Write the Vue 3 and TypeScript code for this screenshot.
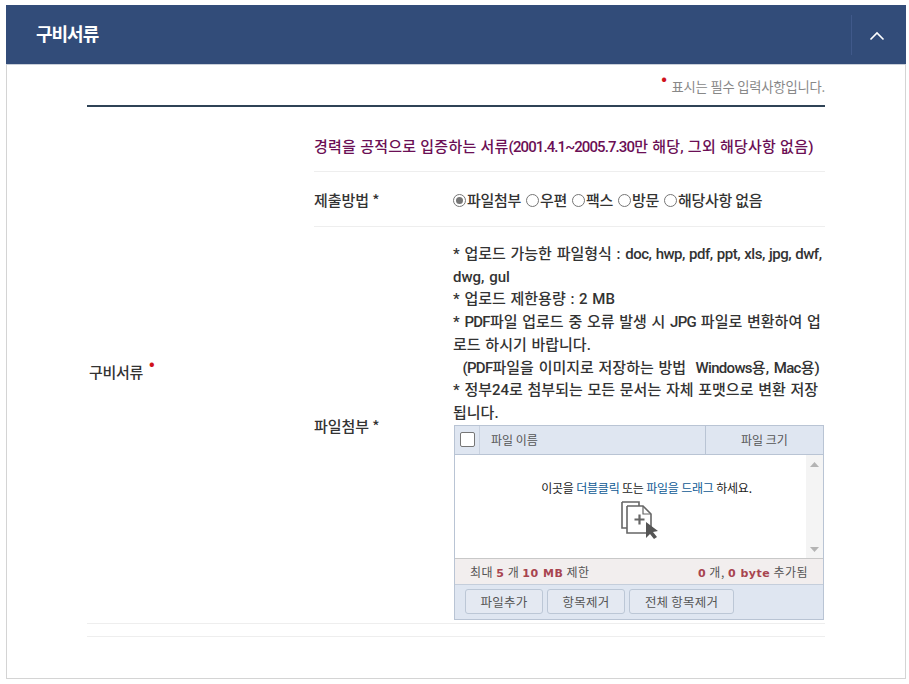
<script setup lang="ts">
const methods = ['파일첨부', '우편', '팩스', '방문', '해당사항 없음']
</script>

<template>
  <div class="page">
    <section class="card">
      <header class="head">
        <h2>구비서류</h2>
        <div class="toggle">
          <svg width="16" height="10" viewBox="0 0 16 10"><path d="M1.5 8.5 8 2l6.5 6.5" fill="none" stroke="#fff" stroke-width="1.6" /></svg>
        </div>
      </header>
      <div class="body">
        <p class="note"><i class="dot">•</i> 표시는 필수 입력사항입니다.</p>
        <div class="form">
          <div class="label"><span>구비서류</span><i class="dot big">•</i></div>
          <div class="rows">
            <div class="row title"><span>경력을 공적으로 입증하는 서류<span class="tight-date">(2001.4.1~2005.7.30</span>만 해당, 그외 해당사항 없음)</span></div>
            <div class="row method">
              <div class="key">제출방법 *</div>
              <div class="val radios">
                <label v-for="(m, i) in methods" :key="m" class="radio">
                  <span class="circle" :class="{ on: i === 0 }"></span>{{ m }}
                </label>
              </div>
            </div>
            <div class="row files">
              <div class="key">파일첨부 *</div>
              <div class="val">
                <div class="info">
                  * 업로드 가능한 파일형식 : <span class="tight">doc, hwp, pdf, ppt, xls, jpg, dwf,</span><br />
                  dwg, gul<br />
                  * 업로드 제한용량 : 2 MB<br />
                  * <span class="tighter">PDF</span>파일 업로드 중 오류 발생 시 <span class="tighter">JPG</span> 파일로 변환하여 업<br />
                  로드 하시기 바랍니다.<br />
                  &nbsp;&nbsp;<span class="tighter">(PDF</span>파일을 이미지로 저장하는 방법&nbsp; <span class="tighter">Windows</span>용, <span class="tighter">Mac</span>용)<br />
                  * 정부24로 첨부되는 모든 문서는 자체 포맷으로 변환 저장<br />
                  됩니다.
                </div>
                <div class="uploader">
                  <div class="u-head">
                    <div class="u-check"><span class="box"></span></div>
                    <div class="u-name">파일 이름</div>
                    <div class="u-size">파일 크기</div>
                  </div>
                  <div class="u-drop">
                    <div class="u-msg">
                      <p>이곳을 <b>더블클릭</b> 또는 <b>파일을 드래그</b> 하세요.</p>
                      <svg width="38" height="40" viewBox="0 0 38 40" class="u-icon">
                        <g fill="none" stroke="#666" stroke-width="1.6">
                          <path d="M1 3h17v4" />
                          <path d="M1 3v26h5" />
                          <path d="M6 7h16l8 8v15" fill="#fff" />
                          <path d="M6 7v27h19" />
                          <path d="M22 7v8h8" stroke-width="1.2" />
                        </g>
                        <path d="M13.5 20.5h10M18.5 15.5v10" stroke="#666" stroke-width="2.2" />
                        <path d="M25 23v16l4-4 4 5 3-2-4-5 5-1z" fill="#555" />
                      </svg>
                    </div>
                    <div class="u-scroll">
                      <svg width="9" height="5" viewBox="0 0 9 5"><path d="M4.5 0 9 5H0z" fill="#b4b4b4" /></svg>
                      <svg width="9" height="5" viewBox="0 0 9 5"><path d="M4.5 5 9 0H0z" fill="#b4b4b4" /></svg>
                    </div>
                  </div>
                  <div class="u-stat">
                    <span>최대 <b>5</b> 개 <b>10 MB</b> 제한</span>
                    <span><b>0</b> 개, <b>0 byte</b> 추가됨</span>
                  </div>
                  <div class="u-btns">
                    <button type="button" class="b1">파일추가</button>
                    <button type="button" class="b2">항목제거</button>
                    <button type="button" class="b3">전체 항목제거</button>
                  </div>
                </div>
              </div>
            </div>
          </div>
        </div>
      </div>
    </section>
  </div>
</template>

<style>
html, body { margin: 0; background: #fff; }
</style>

<style scoped>
.page {
  width: 909px;
  height: 684px;
  box-sizing: border-box;
  padding: 5px 3px 5px 6px;
  font-family: "Noto Sans CJK KR", "Noto Sans", sans-serif;
  color: #333;
  overflow: hidden;
}
.card {
  width: 900px;
  height: 674px;
  box-sizing: border-box;
  border: 1px solid #d4d4d4;
  border-top: 0;
}
.head {
  margin: 0 -1px;
  height: 60px;
  background: #324c79;
  border-bottom: 1px solid #c9cfd9;
  box-sizing: border-box;
  display: flex;
  align-items: center;
  justify-content: space-between;
}
.head h2 {
  margin: 0 0 4px 30px;
  color: #fff;
  font-size: 18px;
  font-weight: 700;
  letter-spacing: -1px;
}
.toggle {
  width: 55px;
  height: 40px;
  padding: 2px 5px 0 0;
  border-left: 1px solid #40598a;
  display: flex;
  align-items: center;
  justify-content: center;
  box-sizing: border-box;
}
.body { padding: 0 80px; }
.note {
  margin: 0;
  height: 40px;
  padding-top: 11px;
  box-sizing: border-box;
  text-align: right;
  font-size: 13.3px;
  line-height: 20px;
  letter-spacing: -0.2px;
  color: #888;
}
.dot { color: #d0121b; font-style: normal; font-weight: 700; font-size: 15px; position: relative; top: -8px; margin-right: 2px; }
.form {
  width: 738px;
  border-top: 2px solid #2f4356;
  border-bottom: 1px solid #eee;
  display: flex;
  height: 532px;
  box-sizing: border-box;
  position: relative;
}
.form::after {
  content: "";
  position: absolute;
  left: 0;
  right: 0;
  bottom: 12px;
  border-bottom: 1px solid #eee;
}
.label {
  width: 227px;
  flex: none;
  padding-left: 2px;
  display: flex;
  align-items: center;
  font-size: 15px;
  font-weight: 500;
  color: #333;
  letter-spacing: -0.3px;
  box-sizing: border-box;
}
.dot.big { top: -9px; margin-left: 6px; font-size: 15px; }
.rows { flex: 1; }
.row { border-bottom: 1px solid #eee; font-size: 15px; font-weight: 500; display: flex; align-items: center; }
.row.title {
  height: 65px;
  padding-top: 13px;
  box-sizing: border-box;
  color: #6b0f55;
  font-family: Roboto, "Noto Sans CJK KR", sans-serif;
  letter-spacing: 0.25px;
  white-space: nowrap;
}
.tight-date { letter-spacing: -0.9px; }
.row.method { height: 54px; }
.row.files { border-bottom: 0; height: 397px; }
.key { width: 139px; flex: none; letter-spacing: -0.05px; }
.val { flex: 1; }
.radios { display: flex; align-items: center; gap: 5px; letter-spacing: -0.3px; }
.radio { display: inline-flex; align-items: center; gap: 0; }
.circle {
  width: 13px;
  height: 13px;
  box-sizing: border-box;
  border: 1px solid #767676;
  border-radius: 50%;
  background: #fff;
  margin-top: 2px;
  position: relative;
  margin-right: 1px;
}
.circle.on::after {
  content: "";
  position: absolute;
  inset: 2px;
  border-radius: 50%;
  background: #767676;
}
.files .val { align-self: flex-start; padding-top: 16px; }
.info {
  width: 372px;
  font-family: Roboto, "Noto Sans CJK KR", sans-serif;
  font-size: 15px;
  line-height: 22.7px;
  letter-spacing: 0;
  word-spacing: 1px;
  font-weight: 500;
  white-space: nowrap;
}
.tight { letter-spacing: -0.5px; }
.tighter { letter-spacing: -0.7px; }
.uploader {
  width: 370px;
  margin: 0 0 0 1px;
  height: 195px;
  box-sizing: border-box;
  border: 1px solid #b9c4d4;
  font-size: 12px;
  font-weight: 400;
  color: #555;
  display: flex;
  flex-direction: column;
}
.u-head {
  height: 29px;
  flex: none;
  background: #dfe6f1;
  border-bottom: 1px solid #b9c4d4;
  display: flex;
  align-items: center;
  box-sizing: border-box;
}
.u-check { width: 25px; height: 100%; display: flex; align-items: center; justify-content: center; border-right: 1px solid #c9d2e0; box-sizing: border-box; }
.box { width: 13px; height: 13px; border: 1px solid #767676; border-radius: 2px; background: #fff; }
.u-name { width: 226px; height: 100%; padding-left: 11px; display: flex; align-items: center; border-right: 1px solid #b9c4d4; box-sizing: border-box; }
.u-size { flex: 1; text-align: center; }
.u-drop { flex: none; height: 104px; display: flex; box-sizing: border-box; border-bottom: 1px solid #c8c8c8; background: #fff; }
.u-msg { flex: 1; text-align: center; color: #222; letter-spacing: -0.2px; font-size: 12px; }
.u-msg p { margin: 25px 0 0; line-height: 16px; padding-left: 32px; }
.u-msg b { font-weight: 400; color: #0f5a94; }
.u-icon { display: block; margin: 3px 0 0 166px; }
.u-scroll { width: 17px; background: #f4f4f4; display: flex; flex-direction: column; justify-content: space-between; align-items: center; padding: 7px 0 6px; box-sizing: border-box; }
.u-stat {
  height: 26px;
  flex: none;
  background: #f2eeee;
  border-bottom: 1px solid #c5cedb;
  display: flex;
  justify-content: space-between;
  align-items: center;
  padding: 0 15px;
  box-sizing: border-box;
  letter-spacing: 0.5px;
}
.u-stat b { color: #a8444f; font-family: "DejaVu Sans", sans-serif; font-size: 11px; }
.u-btns {
  flex: 1;
  background: #dfe6f1;
  display: flex;
  gap: 4px;
  padding: 4px 10px;
  box-sizing: border-box;
}
.u-btns button {
  height: 25px;
  padding: 0;
  font: inherit;
  color: #555;
  background: #e4e9f2;
  border: 1px solid #bcc7d6;
  border-radius: 3px;
  font-size: 12.5px;
  letter-spacing: 0.2px;
}
.b1, .b2 { width: 78px; }
.b3 { width: 105px; }
</style>
